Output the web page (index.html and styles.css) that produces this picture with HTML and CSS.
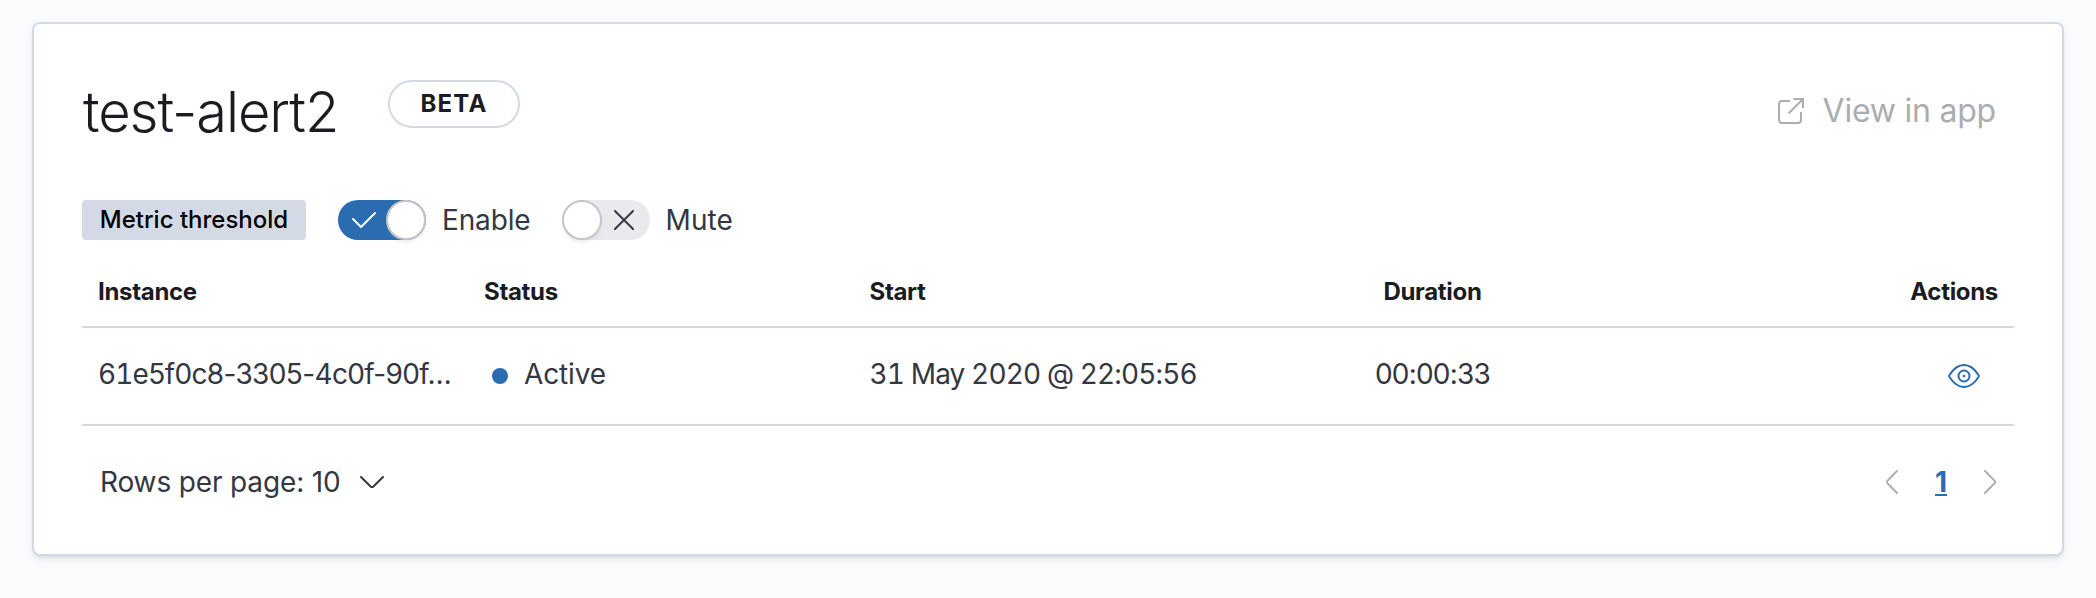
FILE: index.html
```html
<!DOCTYPE html>
<html lang="en">
<head>
<meta charset="utf-8">
<title>test-alert2</title>
<link rel="stylesheet" href="styles.css">
</head>
<body>
<main class="panel">
  <header class="header">
    <div class="heading">
      <h1 class="title">test-alert2</h1>
      <span class="beta">BETA</span>
    </div>
    <button class="view" disabled>
      <svg width="32" height="32" viewBox="0 0 32 32" fill="none" stroke="currentColor" stroke-width="2">
        <path d="M15 6H7a3 3 0 0 0-3 3v16a3 3 0 0 0 3 3h16a3 3 0 0 0 3-3v-8"/>
        <path d="M18.500 4H28v9M27.500 4.500L13.500 18.500"/>
      </svg>
      <span class="view-text">View in app</span>
    </button>
  </header>
  <div class="controls">
    <span class="badge"><span class="badge-text">Metric threshold</span></span>
    <label class="switch">
      <span class="track track-on">
        <svg class="glyph" width="24" height="18" viewBox="0 0 24 18" fill="none" stroke="#fff" stroke-width="2" stroke-linecap="round" stroke-linejoin="round"><path d="M1 8l8 8L23 2"/></svg>
        <span class="thumb"></span>
      </span>
      <span class="switch-text">Enable</span>
    </label>
    <label class="switch">
      <span class="track">
        <span class="thumb"></span>
        <svg class="glyph" width="20" height="20" viewBox="0 0 20 20" fill="none" stroke="#343741" stroke-width="2" stroke-linecap="round"><path d="M1 1l18 18M19 1L1 19"/></svg>
      </span>
      <span class="switch-text mute">Mute</span>
    </label>
  </div>
  <table class="table">
    <colgroup><col class="col-id"><col class="col"><col class="col"><col class="col-time"><col></colgroup>
    <thead>
      <tr><th>Instance</th><th>Status</th><th>Start</th><th class="center">Duration</th><th class="right">Actions</th></tr>
    </thead>
    <tbody>
      <tr>
        <td class="id"><span class="num">61</span>e5f0c8-3305-4c0f-90f…</td>
        <td><span class="health"><i class="dot"></i>Active</span></td>
        <td class="num">31 May 2020 @ 22:05:56</td>
        <td class="center time">00:00:33</td>
        <td><span class="action">
          <svg width="32" height="24" viewBox="0 0 32 24" fill="none" stroke="#2b6cb0" stroke-width="2">
            <path d="M1.500 11C5 5.500 10 1 16 1s11 4.500 14.500 10q.6 1 0 2C27 18.500 22 23 16 23S5 18.500 1.500 13q-.6-1 0-2z"/>
            <circle cx="16" cy="12" r="5.500"/><circle cx="16" cy="12" r="1.300" fill="#2b6cb0" stroke="none"/>
          </svg></span></td>
      </tr>
    </tbody>
  </table>
  <footer class="footer">
    <div class="rows">
      <span class="rows-text">Rows per page: 10</span>
      <svg width="24" height="14" viewBox="0 0 24 14" fill="none" stroke="currentColor" stroke-width="2" stroke-linecap="round"><path d="M1 2l9.600 9.400q1.400 1.200 2.800 0L23 2"/></svg>
    </div>
    <nav class="pager">
      <svg width="12" height="24" viewBox="0 0 12 24" fill="none" stroke="#abadb1" stroke-width="2" stroke-linecap="round"><path d="M11 1L1.600 10.600q-1.200 1.400 0 2.800L11 23"/></svg>
      <a class="page">1</a>
      <svg width="12" height="24" viewBox="0 0 12 24" fill="none" stroke="#abadb1" stroke-width="2" stroke-linecap="round"><path d="M1 1l9.400 9.600q1.200 1.400 0 2.800L1 23"/></svg>
    </nav>
  </footer>
</main>
</body>
</html>
```
FILE: styles.css
```css
* { box-sizing: border-box; }
body {
  margin: 0;
  min-height: 598px;
  padding: 22px 32px 42px;
  background: #fafbfd;
  color: #343741;
  font-family: Inter, "Liberation Sans", sans-serif;
  font-size: 28px;
  line-height: 40px;
  letter-spacing: -0.005em;
}
svg { display: block; flex: none; }
.panel {
  height: 534px;
  padding: 48px;
  background: #fff;
  border: 2px solid #d3dae6;
  border-radius: 8px;
  box-shadow: 0 4px 4px -2px rgba(152, 162, 179, 0.3), 0 2px 10px rgba(152, 162, 179, 0.12);
}
.header { display: flex; justify-content: space-between; height: 128px; }
.heading { display: flex; align-items: flex-start; gap: 50px; }
.title {
  margin: 8px 0 0;
  padding-left: 1px;
  width: 256px;
  color: #1a1c21;
  font-size: 56px;
  font-weight: 300;
  line-height: 64px;
  letter-spacing: -0.019em;
  white-space: nowrap;
}
.beta {
  width: 132px;
  height: 48px;
  margin-top: 8px;
  border: 2px solid #d3dae6;
  border-radius: 24px;
  color: #1a1c21;
  font-size: 24px;
  font-weight: 700;
  line-height: 43px;
  letter-spacing: 0.05em;
  text-align: center;
}
.view {
  display: flex;
  align-items: center;
  gap: 16px;
  height: 40px;
  margin: 19px 18px 0 0;
  padding: 0;
  border: 0;
  background: none;
  color: #abadb1;
  font: inherit;
  font-size: 32px;
  letter-spacing: -0.007em;
}
.controls { display: flex; height: 40px; gap: 31px; }
.badge {
  width: 224px;
  margin-right: 1px;
  border-radius: 4px;
  background: #d3dae6;
  color: #000;
  font-size: 24px;
  font-weight: 500;
  line-height: 40px;
  letter-spacing: 0;
  text-align: center;
}
.switch { display: flex; gap: 16px; }
.mute { letter-spacing: 0.004em; }
.track {
  display: flex;
  align-items: center;
  justify-content: space-between;
  width: 88px;
  height: 40px;
  padding-right: 16px;
  border-radius: 20px;
  background: #e9eaee;
}
.track-on { padding: 0 0 0 14px; background: #2b6cb0; }
.thumb {
  width: 40px;
  height: 40px;
  border: 2px solid #c5c6c7;
  border-radius: 50%;
  background: #fff;
  box-shadow: 0 4px 4px -2px rgba(152, 162, 179, 0.25);
}
.table {
  width: 100%;
  margin-top: 24px;
  border-collapse: separate;
  border-spacing: 0;
  table-layout: fixed;
}
.col-id { width: 386px; }
.col { width: 385.500px; }
.col-time { width: 387px; }
.table th, .table td {
  padding: 0 16px;
  border-bottom: 2px solid #d3dae6;
  text-align: left;
  white-space: nowrap;
}
.table th {
  height: 64px;
  padding-bottom: 6px;
  color: #1a1c21;
  font-size: 24px;
  font-weight: 700;
  letter-spacing: -0.013em;
}
.table td { height: 98px; padding-bottom: 4px; }
.table .id { letter-spacing: -0.0225em; }
.table .num { font-variant-numeric: tabular-nums; letter-spacing: -0.031em; }
.table .time { letter-spacing: -0.028em; }
.table .center { text-align: center; }
.table .right { text-align: right; }
.health { display: flex; align-items: center; gap: 16px; padding-left: 8px; }
.dot { width: 16px; height: 16px; margin-top: 3px; border-radius: 50%; background: #2b6cb0; }
.action { display: flex; justify-content: flex-end; padding: 4px 18px 0 0; }
.footer {
  display: flex;
  justify-content: space-between;
  align-items: center;
  height: 40px;
  margin-top: 36px;
  padding: 0 18px;
}
.rows { display: flex; align-items: center; gap: 19px; }
.pager { display: flex; align-items: center; gap: 37px; }
.page {
  color: #2b6cb0;
  font-weight: 700;
  text-decoration: underline;
  text-decoration-thickness: 2px;
  text-underline-offset: 2px;
}
```
